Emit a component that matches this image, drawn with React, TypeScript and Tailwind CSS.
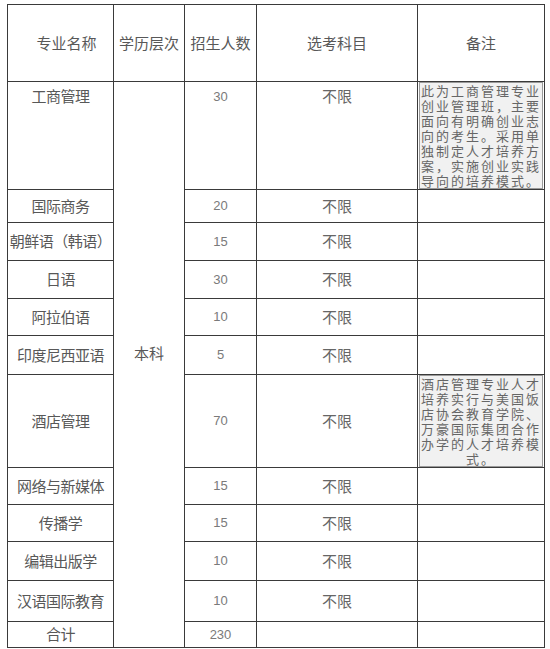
import { Fragment } from "react";

const rows = [
  { name: "工商管理", num: "30", h: "h-[107px]", top: true, note: ["此为工商管理专业", "创业管理班，主要", "面向有明确创业志", "向的考生。采用单", "独制定人才培养方", "案，实施创业实践", "导向的培养模式。"] },
  { name: "国际商务", num: "20", h: "h-[33px]" },
  { name: "朝鲜语（韩语）", num: "15", h: "h-[38px]" },
  { name: "日语", num: "30", h: "h-[38px]" },
  { name: "阿拉伯语", num: "10", h: "h-[37px]" },
  { name: "印度尼西亚语", num: "5", h: "h-[39px]" },
  { name: "酒店管理", num: "70", h: "h-[90px]", note: ["酒店管理专业人才", "培养实行与美国饭", "店协会教育学院、", "万豪国际集团合作", "办学的人才培养模", "式。"] },
  { name: "网络与新媒体", num: "15", h: "h-[37px]" },
  { name: "传播学", num: "15", h: "h-[37px]" },
  { name: "编辑出版学", num: "10", h: "h-[39px]" },
  { name: "汉语国际教育", num: "10", h: "h-[41px]" },
  { name: "合计", num: "230", h: "h-[26px]", total: true },
];

const cell = "border border-[#3a3a3a] p-0 text-center";

export default function App() {
  return (
    <div className="w-[550px] h-[649px] bg-white pt-[4px] pl-[7px] text-[#585858] font-['Noto_Sans_CJK_SC','Noto_Sans',sans-serif]">
      <table className="table-fixed border-collapse w-[537px]">
        <colgroup>
          <col className="w-[106px]" />
          <col className="w-[71px]" />
          <col className="w-[72px]" />
          <col className="w-[161px]" />
          <col className="w-[127px]" />
        </colgroup>
        <tbody>
          <tr className="h-[77px] text-[15px]">
            <td className={`${cell} pl-[12px]`}>专业名称</td>
            <td className={`${cell} whitespace-nowrap`}>学历层次</td>
            <td className={`${cell} whitespace-nowrap`}>招生人数</td>
            <td className={cell}>选考科目</td>
            <td className={cell}>备注</td>
          </tr>
          {rows.map((r, i) => (
            <tr key={r.name} className={r.h}>
              <td className={`${cell} text-[15px] whitespace-nowrap tracking-[-0.5px] ${r.top ? "align-top pt-[3px]" : ""}`}>
                {r.name}
              </td>
              {i === 0 && (
                <td rowSpan={rows.length} className={`${cell} text-[15px] pb-[22px]`}>
                  本科
                </td>
              )}
              <td className={`${cell} text-[13px] text-[#7a7a7a] font-['Liberation_Sans',sans-serif] ${r.top ? "align-top pt-[5px]" : ""}`}>
                {r.num}
              </td>
              <td className={`${cell} text-[15px] text-[#666] ${r.top ? "align-top pt-[3px]" : ""}`}>
                {r.total ? "" : "不限"}
              </td>
              <td className={`${cell} align-top`}>
                {r.note && (
                  <div className="h-full bg-[#f1f1f1] border border-[#9a9a9a] mx-[1px] text-center whitespace-nowrap text-[13px] leading-[15px] tracking-[2px] text-[#666]">
                    {r.note.map((l, j) => (
                      <Fragment key={l}>
                        {j > 0 && <br />}
                        {l}
                      </Fragment>
                    ))}
                  </div>
                )}
              </td>
            </tr>
          ))}
        </tbody>
      </table>
    </div>
  );
}
